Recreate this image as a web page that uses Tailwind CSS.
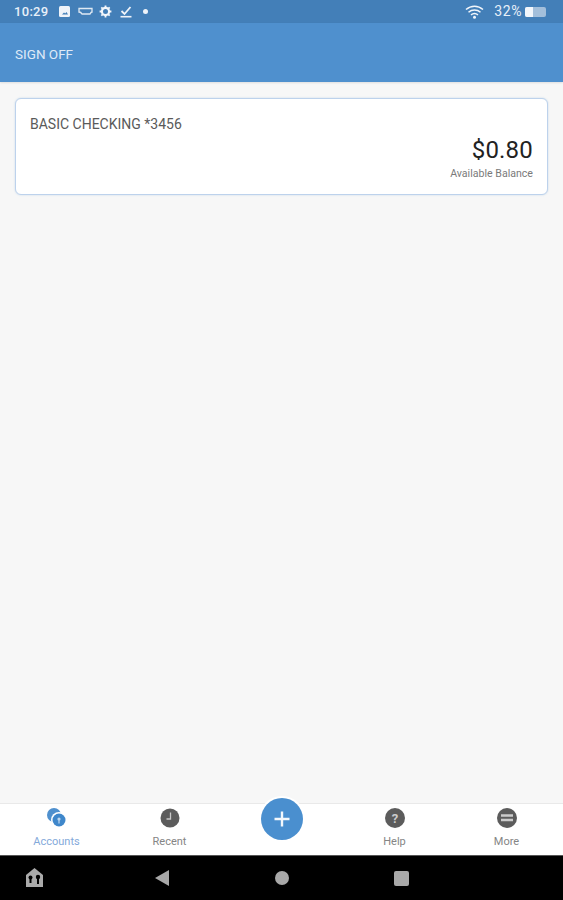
<!DOCTYPE html>
<html lang="en">
<head>
  <meta charset="UTF-8">
  <meta name="viewport" content="width=device-width, initial-scale=1.0">
  <title>Accounts</title>
  <script src="https://cdn.jsdelivr.net/npm/@tailwindcss/browser@4"></script>
</head>
<body class="bg-[#f7f7f7] font-['Roboto',sans-serif] overflow-hidden">
  <div class="h-[900px] flex flex-col">
    <!-- status bar -->
    <div class="h-[23px] bg-[#437fb8] text-[#e8f0f8] flex items-center pl-[14px] pr-[17px]">
      <span class="text-[13px] font-medium tracking-[0.3px] w-[44px]">10:29</span>
      <div class="flex items-center">
        <svg class="w-[13px] h-[13px]" viewBox="0 0 13 13"><rect x="1" y="1" width="11" height="11" rx="1.500" fill="#eef3f9"/><path d="M4 9.500l2-2 1.200 1 1.300-1.400L10 9.500z" fill="#437fb8"/></svg>
        <svg class="w-[15px] h-[9px] ml-[7px]" viewBox="0 0 15 9"><path d="M1 1.500h13v3.500c-1 0-1.500 1-2 2H4c-.5-1-1-2-3-2z" fill="none" stroke="#dfe9f3" stroke-width="1.300"/></svg>
        <svg class="w-[13px] h-[13px] ml-[6px]" viewBox="0 0 13 13"><circle cx="6.500" cy="6.500" r="3.600" fill="none" stroke="#f2f6fb" stroke-width="2.200"/><path d="M6.500 0.600v2M6.500 10.400v2M0.600 6.500h2M10.400 6.500h2M2.300 2.300l1.400 1.400M9.300 9.300l1.400 1.400M2.300 10.700l1.400-1.400M9.300 3.700l1.400-1.400" stroke="#f2f6fb" stroke-width="1.800"/></svg>
        <svg class="w-[12px] h-[13px] ml-[8px]" viewBox="0 0 12 13"><path d="M1.500 6l3 3 6-7" fill="none" stroke="#eef3f9" stroke-width="1.800"/><path d="M0.500 11.700h11" stroke="#eef3f9" stroke-width="1.600"/></svg>
        <div class="w-[5px] h-[5px] rounded-full bg-[#eef3f9] ml-[11px]"></div>
      </div>
      <div class="ml-auto flex items-center">
        <svg class="w-[19px] h-[14px]" viewBox="0 0 19 14"><path d="M1 4.500c5-4.500 12-4.500 17 0M3.500 7.200c3.500-3 8.500-3 12 0M6 9.800c2-1.600 5-1.600 7 0" fill="none" stroke="#f2f6fb" stroke-width="1.500"/><circle cx="9.500" cy="12.200" r="1.500" fill="#f2f6fb"/></svg>
        <span class="text-[14px] ml-[10px] tracking-[0.6px]">32%</span>
        <div class="w-[21px] h-[10px] rounded-[2px] bg-[#a3bfdb] ml-[3px] overflow-hidden">
          <div class="w-[8px] h-full bg-[#f2f6fb]"></div>
        </div>
      </div>
    </div>
    <!-- header -->
    <div class="h-[59px] bg-[#4f90ce] flex items-center px-[15px] pt-[4px] shadow-[0_1px_2px_rgba(0,0,0,0.1)]">
      <span class="text-[13.5px] text-[#dfeaf7]">SIGN OFF</span>
    </div>
    <!-- accounts -->
    <main class="flex-1 px-[15px] pt-[16px]">
      <div class="h-[97px] bg-white border border-[#bdd2ec] rounded-[6px] px-[14px] pt-[17px] shadow-[0_0_2px_rgba(79,144,206,0.3)]">
        <p class="text-[14px] leading-[16px] text-[#5a5a5a]">BASIC CHECKING *3456</p>
        <p class="text-[24px] leading-[30px] text-[#222] text-right mt-[3px] tracking-[0.2px]">$0.80</p>
        <p class="text-[10.6px] leading-[14px] text-[#7a7a7a] text-right mt-[2px]">Available Balance</p>
      </div>
    </main>
    <!-- bottom nav -->
    <nav class="relative h-[52px] bg-white border-t border-[#e9e9e9] flex text-[11px] text-[#858585]">
      <a class="w-[113px] flex flex-col items-center pt-[3px]">
        <svg class="w-[22px] h-[22px]" viewBox="0 0 22 22"><circle cx="8" cy="8" r="7" fill="#4f90ce"/><circle cx="13" cy="13" r="8" fill="#fff"/><circle cx="13" cy="13" r="6.500" fill="#3f87cb"/><circle cx="13" cy="12" r="1.600" fill="#bcd6ee"/><path d="M13 12v4.500" stroke="#bcd6ee" stroke-width="1.200"/></svg>
        <span class="text-[#83a9da] mt-[5px] leading-[16px]">Accounts</span>
      </a>
      <a class="w-[112px] flex flex-col items-center pt-[3px] pl-[1px]">
        <svg class="w-[22px] h-[22px]" viewBox="0 0 22 22"><circle cx="11" cy="11" r="9.500" fill="#5c5c5c"/><path d="M11.500 5.500v6.500h-4" fill="none" stroke="#c8c8c8" stroke-width="1.300"/></svg>
        <span class="mt-[5px] leading-[16px]">Recent</span>
      </a>
      <div class="w-[113px]"></div>
      <a class="w-[112px] flex flex-col items-center pt-[3px] pl-[1px]">
        <svg class="w-[22px] h-[22px]" viewBox="0 0 22 22"><circle cx="11" cy="11" r="10" fill="#5c5c5c"/><text x="11" y="15.500" text-anchor="middle" font-size="13" font-weight="700" fill="#ccc" font-family="Roboto">?</text></svg>
        <span class="mt-[5px] leading-[16px]">Help</span>
      </a>
      <a class="w-[113px] flex flex-col items-center pt-[3px]">
        <svg class="w-[22px] h-[22px]" viewBox="0 0 22 22"><circle cx="11" cy="11" r="10" fill="#5c5c5c"/><path d="M5 8.500h12M5 13h12" stroke="#ccc" stroke-width="2.500"/></svg>
        <span class="mt-[5px] leading-[16px]">More</span>
      </a>
      <!-- floating add button -->
      <button class="absolute left-[261px] top-[-6px] w-[42px] h-[42px] rounded-full bg-[#4a8fcf] ring-2 ring-white flex items-center justify-center">
        <svg class="w-[18px] h-[18px]" viewBox="0 0 18 18"><path d="M9 1.500v15M1.500 9h15" stroke="#f4f8fc" stroke-width="2.400"/></svg>
      </button>
    </nav>
    <!-- android nav -->
    <div class="h-[45px] bg-black relative shrink-0 border-t border-[#555]">
      <svg class="absolute left-[24px] top-[11px] w-[21px] h-[21px]" viewBox="0 0 21 21"><path d="M2 8l8.500-7L19 8v12H2z" fill="#aaa"/><circle cx="6.500" cy="10.500" r="2" fill="#000"/><path d="M5.500 12h2v4h-2z" fill="#000"/><circle cx="14" cy="10" r="2.200" fill="#000"/><path d="M13 10h2v7h-2z" fill="#000"/></svg>
      <svg class="absolute left-[154px] top-[13px] w-[16px] h-[18px]" viewBox="0 0 16 18"><path d="M15 1v16L1 9z" fill="#a8a8a8"/></svg>
      <div class="absolute left-[275px] top-[15px] w-[14px] h-[14px] rounded-full bg-[#a8a8a8]"></div>
      <div class="absolute left-[394px] top-[15px] w-[15px] h-[15px] rounded-[2px] bg-[#a8a8a8]"></div>
    </div>
  </div>
</body>
</html>
